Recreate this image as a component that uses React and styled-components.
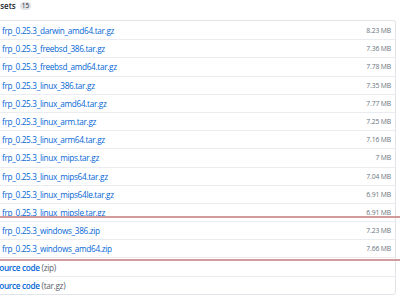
import styled, { createGlobalStyle } from "styled-components";

const GlobalStyle = createGlobalStyle`
  html, body {
    margin: 0;
    padding: 0;
    background: #fff;
    overflow: hidden;
  }
  body {
    font-family: "Open Sans", "Noto Sans", Arial, sans-serif;
    color: #24292e;
  }
`;

const Page = styled.div`
  position: relative;
  width: 400px;
  height: 300px;
  overflow: hidden;
`;

const Summary = styled.div`
  display: flex;
  align-items: center;
  gap: 4px;
  height: 12px;
  margin-left: -9px;
  margin-bottom: 8px;
  font-size: 8px;
  font-weight: 600;
  line-height: 12px;
`;

const Counter = styled.span`
  display: inline-block;
  padding: 0 2px;
  min-width: 5px;
  height: 8px;
  line-height: 8px;
  font-size: 6.5px;
  font-weight: 400;
  text-align: center;
  color: #24292e;
  background: #e1e4e8;
  border-radius: 4px;
`;

const Box = styled.div`
  margin-left: -20px;
  width: 416px;
  border: 1px solid #e1e4e8;
  border-radius: 3px;
  box-sizing: border-box;
`;

const Row = styled.div`
  display: flex;
  align-items: center;
  justify-content: space-between;
  height: 18.2px;
  box-sizing: border-box;
  padding: 0 4px 0 ${({ indent }) => indent}px;
  border-top: ${({ first }) => (first ? "none" : "1px solid #eaecef")};
`;

const Name = styled.a`
  color: #0366d6;
  font-size: 8.2px;
  letter-spacing: -0.3px;
  font-weight: ${({ bold }) => (bold ? 600 : 400)};
  text-decoration: none;
  white-space: nowrap;
`;

const Kind = styled.span`
  color: #586069;
  font-weight: 400;
`;

const Size = styled.small`
  color: #6a737d;
  font-size: 6.8px;
  letter-spacing: -0.15px;
  white-space: nowrap;
`;

// red annotation strokes drawn over the list
const Mark = styled.div`
  position: absolute;
  left: 0;
  top: ${({ top }) => top}px;
  width: 400px;
  height: 2px;
  background: #d29c9c;
`;

const assets = [
  ["frp_0.25.3_darwin_amd64.tar.gz", "8.23 MB"],
  ["frp_0.25.3_freebsd_386.tar.gz", "7.36 MB"],
  ["frp_0.25.3_freebsd_amd64.tar.gz", "7.78 MB"],
  ["frp_0.25.3_linux_386.tar.gz", "7.35 MB"],
  ["frp_0.25.3_linux_amd64.tar.gz", "7.77 MB"],
  ["frp_0.25.3_linux_arm.tar.gz", "7.25 MB"],
  ["frp_0.25.3_linux_arm64.tar.gz", "7.16 MB"],
  ["frp_0.25.3_linux_mips.tar.gz", "7 MB"],
  ["frp_0.25.3_linux_mips64.tar.gz", "7.04 MB"],
  ["frp_0.25.3_linux_mips64le.tar.gz", "6.91 MB"],
  ["frp_0.25.3_linux_mipsle.tar.gz", "6.91 MB"],
  ["frp_0.25.3_windows_386.zip", "7.23 MB"],
  ["frp_0.25.3_windows_amd64.zip", "7.66 MB"],
];

export default function App() {
  return (
    <Page>
      <GlobalStyle />
      <Summary>
        Assets <Counter>15</Counter>
      </Summary>
      <Box>
        {assets.map(([name, size], i) => (
          <Row key={name} first={i === 0} indent={21}>
            <Name href="#">{name}</Name>
            <Size>{size}</Size>
          </Row>
        ))}
        <Row indent={14}>
          <Name href="#" bold>
            Source code <Kind>(zip)</Kind>
          </Name>
        </Row>
        <Row indent={14}>
          <Name href="#" bold>
            Source code <Kind>(tar.gz)</Kind>
          </Name>
        </Row>
      </Box>
      <Mark top={216} />
      <Mark top={259} />
    </Page>
  );
}
